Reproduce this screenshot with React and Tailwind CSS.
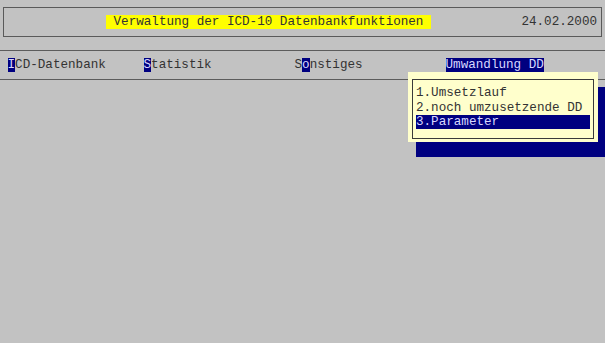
export default function App() {
  const mono = { fontFamily: '"Liberation Mono", "Courier New", monospace' };
  return (
    <div
      className="relative w-[605px] h-[343px] overflow-hidden bg-[#c2c2c2] text-[12.6px] leading-[14px] text-[#333]"
      style={mono}
    >
      <div className="pt-[7px] pl-[3px] pr-[3px]">
        <div className="h-[30px] border border-[#5a5a5a] flex items-center pl-[102px] pr-[4px]">
          <span className="bg-[#ffff00] h-[14px] whitespace-pre">{" Verwaltung der ICD-10 Datenbankfunktionen "}</span>
          <span className="ml-auto whitespace-pre">24.02.2000</span>
        </div>
      </div>
      <div className="mt-[13px] border-t border-b border-[#5c5c5c] h-[30px] flex items-center pl-[7.56px]">
        <div className="w-[136px] whitespace-pre">
          <span className="bg-[#000080] text-[#d8d8ff]">I</span>CD-Datenbank
        </div>
        <div className="w-[151px] whitespace-pre">
          <span className="bg-[#000080] text-[#d8d8ff]">S</span>tatistik
        </div>
        <div className="w-[151px] whitespace-pre">
          S<span className="bg-[#000080] text-[#d8d8ff]">o</span>nstiges
        </div>
        <div className="whitespace-pre">
          <span className="bg-[#000080] text-[#d8d8ff]">Umwandlung DD</span>
        </div>
      </div>

      <div className="absolute left-[416px] top-[87px] right-0 h-[70px] bg-[#000080]" />
      <div className="absolute left-[408px] top-[72px] w-[190px] h-[70px] bg-[#ffffcc] pt-[7px] px-[4px]">
        <div className="h-[60px] border border-[#3a3a3a] pt-[6px] px-[3px]">
          <div className="h-[14.5px] whitespace-pre">1.Umsetzlauf</div>
          <div className="h-[14.5px] whitespace-pre">2.noch umzusetzende DD</div>
          <div className="h-[14px] whitespace-pre bg-[#000080] text-[#d8d8ff]">3.Parameter</div>
        </div>
      </div>
    </div>
  );
}
